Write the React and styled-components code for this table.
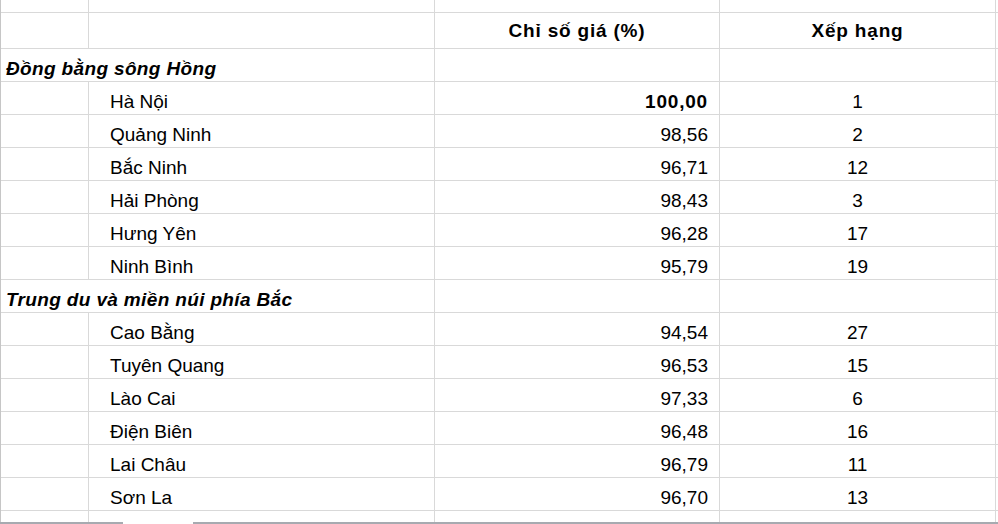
import React from 'react';
import styled, { createGlobalStyle } from 'styled-components';

const GlobalStyle = createGlobalStyle`
  html, body {
    margin: 0;
    padding: 0;
    background: #fff;
    overflow: hidden;
  }
  body {
    font-family: "Liberation Sans", Arial, sans-serif;
    color: #000;
  }
`;

const COLS = '88px 346px 285px 276px 1fr';
const LINE = '#d9d9d9';

const Page = styled.div`
  width: 998px;
  height: 524px;
  display: flex;
  flex-direction: column;
`;

const Sheet = styled.div`
  height: 522px;
  overflow: hidden;
  border-left: 1px solid #c6c6c6;
  box-sizing: border-box;
`;

const Row = styled.div`
  display: grid;
  grid-template-columns: ${COLS};
  height: ${p => p.$h}px;
`;

const Cell = styled.div`
  box-sizing: border-box;
  border-bottom: 1px solid ${LINE};
  border-right: ${p => (p.$last ? 'none' : `1px solid ${LINE}`)};
  grid-column: ${p => (p.$span ? `span ${p.$span}` : 'auto')};
  display: flex;
  align-items: ${p => (p.$middle ? 'center' : 'flex-end')};
  justify-content: ${p => p.$align || 'flex-start'};
  padding: 0 ${p => p.$pr || 0}px ${p => (p.$middle ? 0 : 1)}px ${p => p.$pl || 0}px;
  font-size: 19px;
  line-height: 22px;
  font-weight: ${p => (p.$bold ? 700 : 400)};
  font-style: ${p => (p.$italic ? 'italic' : 'normal')};
  letter-spacing: ${p => (p.$bold ? (p.$italic ? '0.35px' : '0.8px') : 'normal')};
  white-space: nowrap;
  overflow: visible;
`;

const BottomBar = styled.div`
  height: 2px;
  display: flex;
`;

const BarPart = styled.div`
  height: 100%;
  width: ${p => (p.$w ? `${p.$w}px` : 'auto')};
  flex: ${p => (p.$w ? 'none' : 1)};
  background: ${p => (p.$gap ? '#fff' : '#a7aab0')};
`;

const data = [
  {
    region: 'Đồng bằng sông Hồng',
    items: [
      ['Hà Nội', '100,00', '1', true],
      ['Quảng Ninh', '98,56', '2'],
      ['Bắc Ninh', '96,71', '12'],
      ['Hải Phòng', '98,43', '3'],
      ['Hưng Yên', '96,28', '17'],
      ['Ninh Bình', '95,79', '19'],
    ],
  },
  {
    region: 'Trung du và miền núi phía Bắc',
    items: [
      ['Cao Bằng', '94,54', '27'],
      ['Tuyên Quang', '96,53', '15'],
      ['Lào Cai', '97,33', '6'],
      ['Điện Biên', '96,48', '16'],
      ['Lai Châu', '96,79', '11'],
      ['Sơn La', '96,70', '13'],
      ['Thái Nguyên', '98,00', '8'],
    ],
  },
];

const DataRow = ({ name, value, rank, strong }) => (
  <Row $h={33}>
    <Cell />
    <Cell $pl={21}>{name}</Cell>
    <Cell $align="flex-end" $pr={11} $bold={strong}>{value}</Cell>
    <Cell $align="center">{rank}</Cell>
    <Cell $last />
  </Row>
);

const App = () => (
  <Page>
    <GlobalStyle />
    <Sheet>
      <Row $h={13}>
        <Cell />
        <Cell />
        <Cell />
        <Cell />
        <Cell $last />
      </Row>
      <Row $h={36}>
        <Cell />
        <Cell />
        <Cell $align="center" $middle $bold>Chỉ số giá (%)</Cell>
        <Cell $align="center" $middle $bold>Xếp hạng</Cell>
        <Cell $last />
      </Row>
      {data.map(group => (
        <React.Fragment key={group.region}>
          <Row $h={33}>
            <Cell $span={2} $pl={5} $bold $italic>{group.region}</Cell>
            <Cell />
            <Cell />
            <Cell $last />
          </Row>
          {group.items.map(([name, value, rank, strong]) => (
            <DataRow key={name} name={name} value={value} rank={rank} strong={strong} />
          ))}
        </React.Fragment>
      ))}
    </Sheet>
    <BottomBar>
      <BarPart $w={123} />
      <BarPart $w={70} $gap />
      <BarPart />
    </BottomBar>
  </Page>
);

export default App;
